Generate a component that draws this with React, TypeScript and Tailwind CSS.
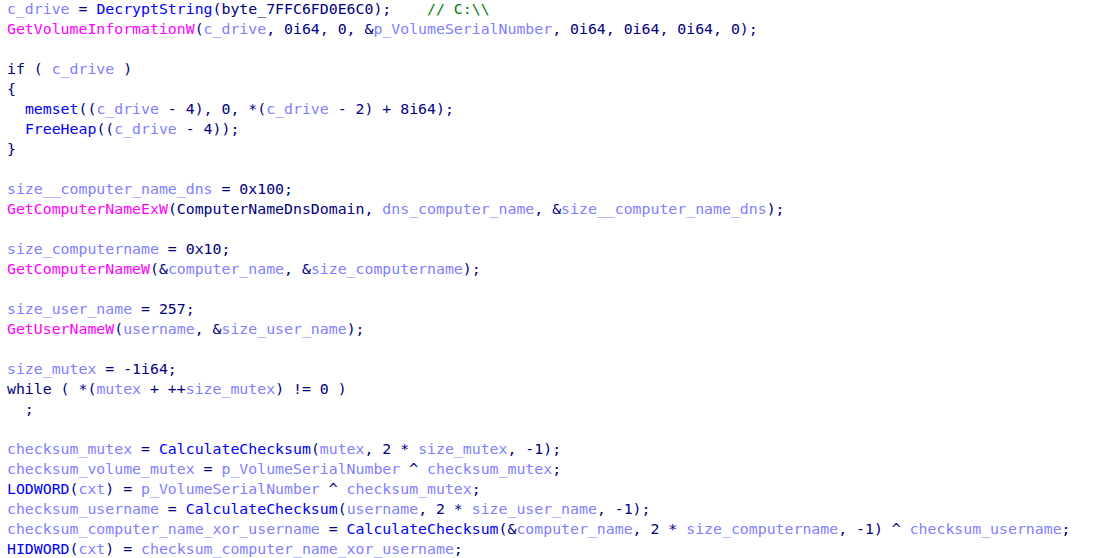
import React from 'react';

type Kind = 'n' | 'v' | 'f' | 'u' | 'c';
type Tok = [Kind, string];

const cls: Record<Kind, string> = {
  n: 'text-[#000080]',
  v: 'text-[#8080ff]',
  f: 'text-[#ff00ff]',
  u: 'text-[#0000ff]',
  c: 'text-[#008000]',
};

const lines: Tok[][] = [
  [['v', 'c_drive'], ['n', ' = '], ['u', 'DecryptString'], ['n', '(byte_7FFC6FD0E6C0);    '], ['c', '// C:\\\\']],
  [['f', 'GetVolumeInformationW'], ['n', '('], ['v', 'c_drive'], ['n', ', 0i64, 0, &'], ['v', 'p_VolumeSerialNumber'], ['n', ', 0i64, 0i64, 0i64, 0);']],
  [],
  [['n', 'if ( '], ['v', 'c_drive'], ['n', ' )']],
  [['n', '{']],
  [['n', '  '], ['u', 'memset'], ['n', '(('], ['v', 'c_drive'], ['n', ' - 4), 0, *('], ['v', 'c_drive'], ['n', ' - 2) + 8i64);']],
  [['n', '  '], ['u', 'FreeHeap'], ['n', '(('], ['v', 'c_drive'], ['n', ' - 4));']],
  [['n', '}']],
  [],
  [['v', 'size__computer_name_dns'], ['n', ' = 0x100;']],
  [['f', 'GetComputerNameExW'], ['n', '(ComputerNameDnsDomain, '], ['v', 'dns_computer_name'], ['n', ', &'], ['v', 'size__computer_name_dns'], ['n', ');']],
  [],
  [['v', 'size_computername'], ['n', ' = 0x10;']],
  [['f', 'GetComputerNameW'], ['n', '(&'], ['v', 'computer_name'], ['n', ', &'], ['v', 'size_computername'], ['n', ');']],
  [],
  [['v', 'size_user_name'], ['n', ' = 257;']],
  [['f', 'GetUserNameW'], ['n', '('], ['v', 'username'], ['n', ', &'], ['v', 'size_user_name'], ['n', ');']],
  [],
  [['v', 'size_mutex'], ['n', ' = -1i64;']],
  [['n', 'while ( *('], ['v', 'mutex'], ['n', ' + ++'], ['v', 'size_mutex'], ['n', ') != 0 )']],
  [['n', '  ;']],
  [],
  [['v', 'checksum_mutex'], ['n', ' = '], ['u', 'CalculateChecksum'], ['n', '('], ['v', 'mutex'], ['n', ', 2 * '], ['v', 'size_mutex'], ['n', ', -1);']],
  [['v', 'checksum_volume_mutex'], ['n', ' = '], ['v', 'p_VolumeSerialNumber'], ['n', ' ^ '], ['v', 'checksum_mutex'], ['n', ';']],
  [['u', 'LODWORD'], ['n', '('], ['v', 'cxt'], ['n', ') = '], ['v', 'p_VolumeSerialNumber'], ['n', ' ^ '], ['v', 'checksum_mutex'], ['n', ';']],
  [['v', 'checksum_username'], ['n', ' = '], ['u', 'CalculateChecksum'], ['n', '('], ['v', 'username'], ['n', ', 2 * '], ['v', 'size_user_name'], ['n', ', -1);']],
  [['v', 'checksum_computer_name_xor_username'], ['n', ' = '], ['u', 'CalculateChecksum'], ['n', '(&'], ['v', 'computer_name'], ['n', ', 2 * '], ['v', 'size_computername'], ['n', ', -1) ^ '], ['v', 'checksum_username'], ['n', ';']],
  [['u', 'HIDWORD'], ['n', '('], ['v', 'cxt'], ['n', ') = '], ['v', 'checksum_computer_name_xor_username'], ['n', ';']],
];

export default function App() {
  return (
    <div className="w-[1096px] h-[558px] overflow-hidden bg-white pl-[7px] font-['DejaVu_Sans_Mono',monospace] text-[14.85px] leading-[20px]">
      <div className="-mt-px">
        {lines.map((line, i) => (
          <div key={i} className="h-[20px] whitespace-pre">
            {line.map(([k, t], j) => (
              <span key={j} className={cls[k]}>
                {t}
              </span>
            ))}
          </div>
        ))}
      </div>
    </div>
  );
}
